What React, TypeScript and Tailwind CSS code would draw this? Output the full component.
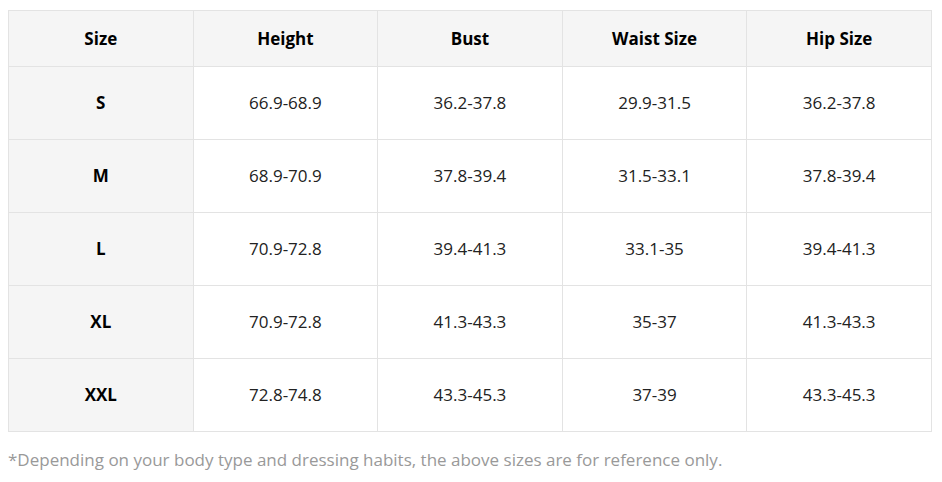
const headers = ['Size', 'Height', 'Bust', 'Waist Size', 'Hip Size'];

const rows = [
  ['S', '66.9-68.9', '36.2-37.8', '29.9-31.5', '36.2-37.8'],
  ['M', '68.9-70.9', '37.8-39.4', '31.5-33.1', '37.8-39.4'],
  ['L', '70.9-72.8', '39.4-41.3', '33.1-35', '39.4-41.3'],
  ['XL', '70.9-72.8', '41.3-43.3', '35-37', '41.3-43.3'],
  ['XXL', '72.8-74.8', '43.3-45.3', '37-39', '43.3-45.3'],
];

export default function App() {
  return (
    <div
      className="bg-white px-2 pt-[10px] text-[17px] text-[#222]"
      style={{ fontFamily: '"Open Sans", "Noto Sans", sans-serif' }}
    >
      <table className="w-[924px] table-fixed border-collapse">
        <thead>
          <tr className="h-[56px] bg-[#f5f5f5]">
            {headers.map((h) => (
              <th key={h} className="border border-[#e3e3e3] font-bold text-black">
                {h}
              </th>
            ))}
          </tr>
        </thead>
        <tbody>
          {rows.map((row) => (
            <tr key={row[0]} className="h-[73px]">
              {row.map((cell, i) =>
                i === 0 ? (
                  <td key={i} className="border border-[#e3e3e3] bg-[#f5f5f5] text-center font-bold text-black">
                    {cell}
                  </td>
                ) : (
                  <td key={i} className="border border-[#e3e3e3] text-center">
                    {cell}
                  </td>
                )
              )}
            </tr>
          ))}
        </tbody>
      </table>
      <p className="mt-[16px] leading-6 text-[#999]">
        *Depending on your body type and dressing habits, the above sizes are for reference only.
      </p>
    </div>
  );
}
